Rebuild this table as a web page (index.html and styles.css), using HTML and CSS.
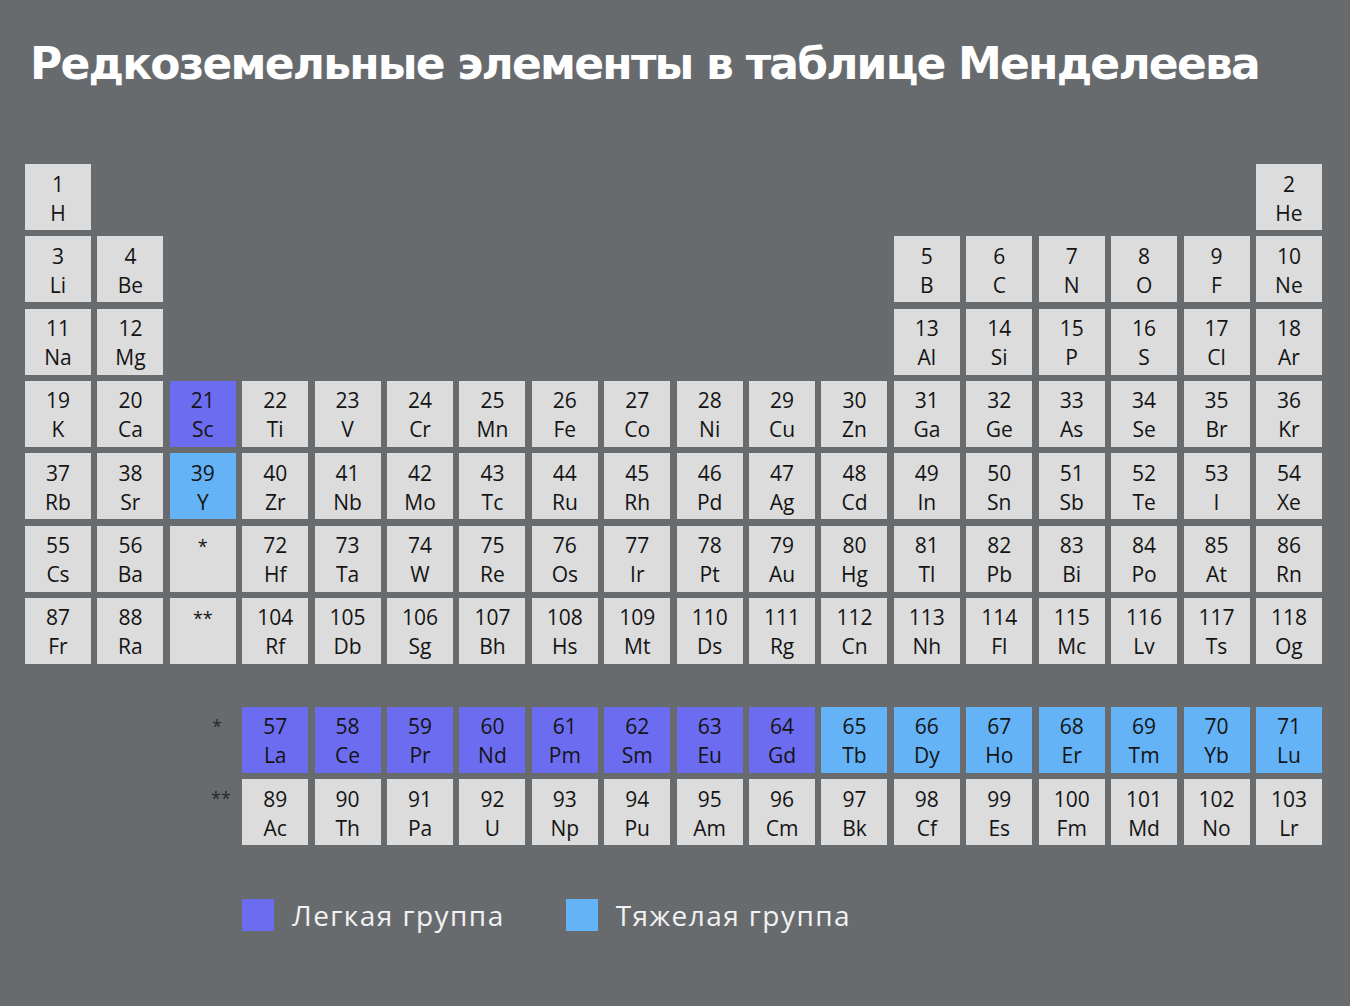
FILE: index.html
```html
<!DOCTYPE html>
<html lang="ru">
<head>
<meta charset="utf-8">
<title>Редкоземельные элементы</title>
<link rel="stylesheet" href="styles.css">
</head>
<body>
<div class="page">
  <h1 class="title">Редкоземельные элементы в таблице Менделеева</h1>

  <div class="table main">
    <div class="cell"><span>1</span><span>H</span></div>
    <div class="cell c18"><span>2</span><span>He</span></div>

    <div class="cell"><span>3</span><span>Li</span></div>
    <div class="cell"><span>4</span><span>Be</span></div>
    <div class="cell c13"><span>5</span><span>B</span></div>
    <div class="cell"><span>6</span><span>C</span></div>
    <div class="cell"><span>7</span><span>N</span></div>
    <div class="cell"><span>8</span><span>O</span></div>
    <div class="cell"><span>9</span><span>F</span></div>
    <div class="cell"><span>10</span><span>Ne</span></div>

    <div class="cell"><span>11</span><span>Na</span></div>
    <div class="cell"><span>12</span><span>Mg</span></div>
    <div class="cell c13"><span>13</span><span>Al</span></div>
    <div class="cell"><span>14</span><span>Si</span></div>
    <div class="cell"><span>15</span><span>P</span></div>
    <div class="cell"><span>16</span><span>S</span></div>
    <div class="cell"><span>17</span><span>Cl</span></div>
    <div class="cell"><span>18</span><span>Ar</span></div>

    <div class="cell"><span>19</span><span>K</span></div>
    <div class="cell"><span>20</span><span>Ca</span></div>
    <div class="cell light"><span>21</span><span>Sc</span></div>
    <div class="cell"><span>22</span><span>Ti</span></div>
    <div class="cell"><span>23</span><span>V</span></div>
    <div class="cell"><span>24</span><span>Cr</span></div>
    <div class="cell"><span>25</span><span>Mn</span></div>
    <div class="cell"><span>26</span><span>Fe</span></div>
    <div class="cell"><span>27</span><span>Co</span></div>
    <div class="cell"><span>28</span><span>Ni</span></div>
    <div class="cell"><span>29</span><span>Cu</span></div>
    <div class="cell"><span>30</span><span>Zn</span></div>
    <div class="cell"><span>31</span><span>Ga</span></div>
    <div class="cell"><span>32</span><span>Ge</span></div>
    <div class="cell"><span>33</span><span>As</span></div>
    <div class="cell"><span>34</span><span>Se</span></div>
    <div class="cell"><span>35</span><span>Br</span></div>
    <div class="cell"><span>36</span><span>Kr</span></div>

    <div class="cell"><span>37</span><span>Rb</span></div>
    <div class="cell"><span>38</span><span>Sr</span></div>
    <div class="cell heavy"><span>39</span><span>Y</span></div>
    <div class="cell"><span>40</span><span>Zr</span></div>
    <div class="cell"><span>41</span><span>Nb</span></div>
    <div class="cell"><span>42</span><span>Mo</span></div>
    <div class="cell"><span>43</span><span>Tc</span></div>
    <div class="cell"><span>44</span><span>Ru</span></div>
    <div class="cell"><span>45</span><span>Rh</span></div>
    <div class="cell"><span>46</span><span>Pd</span></div>
    <div class="cell"><span>47</span><span>Ag</span></div>
    <div class="cell"><span>48</span><span>Cd</span></div>
    <div class="cell"><span>49</span><span>In</span></div>
    <div class="cell"><span>50</span><span>Sn</span></div>
    <div class="cell"><span>51</span><span>Sb</span></div>
    <div class="cell"><span>52</span><span>Te</span></div>
    <div class="cell"><span>53</span><span>I</span></div>
    <div class="cell"><span>54</span><span>Xe</span></div>

    <div class="cell"><span>55</span><span>Cs</span></div>
    <div class="cell"><span>56</span><span>Ba</span></div>
    <div class="cell mark"><span>*</span></div>
    <div class="cell"><span>72</span><span>Hf</span></div>
    <div class="cell"><span>73</span><span>Ta</span></div>
    <div class="cell"><span>74</span><span>W</span></div>
    <div class="cell"><span>75</span><span>Re</span></div>
    <div class="cell"><span>76</span><span>Os</span></div>
    <div class="cell"><span>77</span><span>Ir</span></div>
    <div class="cell"><span>78</span><span>Pt</span></div>
    <div class="cell"><span>79</span><span>Au</span></div>
    <div class="cell"><span>80</span><span>Hg</span></div>
    <div class="cell"><span>81</span><span>Tl</span></div>
    <div class="cell"><span>82</span><span>Pb</span></div>
    <div class="cell"><span>83</span><span>Bi</span></div>
    <div class="cell"><span>84</span><span>Po</span></div>
    <div class="cell"><span>85</span><span>At</span></div>
    <div class="cell"><span>86</span><span>Rn</span></div>

    <div class="cell"><span>87</span><span>Fr</span></div>
    <div class="cell"><span>88</span><span>Ra</span></div>
    <div class="cell mark"><span>**</span></div>
    <div class="cell"><span>104</span><span>Rf</span></div>
    <div class="cell"><span>105</span><span>Db</span></div>
    <div class="cell"><span>106</span><span>Sg</span></div>
    <div class="cell"><span>107</span><span>Bh</span></div>
    <div class="cell"><span>108</span><span>Hs</span></div>
    <div class="cell"><span>109</span><span>Mt</span></div>
    <div class="cell"><span>110</span><span>Ds</span></div>
    <div class="cell"><span>111</span><span>Rg</span></div>
    <div class="cell"><span>112</span><span>Cn</span></div>
    <div class="cell"><span>113</span><span>Nh</span></div>
    <div class="cell"><span>114</span><span>Fl</span></div>
    <div class="cell"><span>115</span><span>Mc</span></div>
    <div class="cell"><span>116</span><span>Lv</span></div>
    <div class="cell"><span>117</span><span>Ts</span></div>
    <div class="cell"><span>118</span><span>Og</span></div>
  </div>

  <div class="table series">
    <div class="label c3">*</div>
    <div class="cell light"><span>57</span><span>La</span></div>
    <div class="cell light"><span>58</span><span>Ce</span></div>
    <div class="cell light"><span>59</span><span>Pr</span></div>
    <div class="cell light"><span>60</span><span>Nd</span></div>
    <div class="cell light"><span>61</span><span>Pm</span></div>
    <div class="cell light"><span>62</span><span>Sm</span></div>
    <div class="cell light"><span>63</span><span>Eu</span></div>
    <div class="cell light"><span>64</span><span>Gd</span></div>
    <div class="cell heavy"><span>65</span><span>Tb</span></div>
    <div class="cell heavy"><span>66</span><span>Dy</span></div>
    <div class="cell heavy"><span>67</span><span>Ho</span></div>
    <div class="cell heavy"><span>68</span><span>Er</span></div>
    <div class="cell heavy"><span>69</span><span>Tm</span></div>
    <div class="cell heavy"><span>70</span><span>Yb</span></div>
    <div class="cell heavy"><span>71</span><span>Lu</span></div>

    <div class="label c3 two">**</div>
    <div class="cell"><span>89</span><span>Ac</span></div>
    <div class="cell"><span>90</span><span>Th</span></div>
    <div class="cell"><span>91</span><span>Pa</span></div>
    <div class="cell"><span>92</span><span>U</span></div>
    <div class="cell"><span>93</span><span>Np</span></div>
    <div class="cell"><span>94</span><span>Pu</span></div>
    <div class="cell"><span>95</span><span>Am</span></div>
    <div class="cell"><span>96</span><span>Cm</span></div>
    <div class="cell"><span>97</span><span>Bk</span></div>
    <div class="cell"><span>98</span><span>Cf</span></div>
    <div class="cell"><span>99</span><span>Es</span></div>
    <div class="cell"><span>100</span><span>Fm</span></div>
    <div class="cell"><span>101</span><span>Md</span></div>
    <div class="cell"><span>102</span><span>No</span></div>
    <div class="cell"><span>103</span><span>Lr</span></div>
  </div>

  <div class="legend">
    <div class="legend-item"><span class="swatch swatch-light"></span><span class="legend-text">Легкая группа</span></div>
    <div class="legend-item"><span class="swatch swatch-heavy"></span><span class="legend-text">Тяжелая группа</span></div>
  </div>
</div>
</body>
</html>
```

FILE: styles.css
```css
html, body {
  margin: 0;
  padding: 0;
  background: #686b6e;
}

.page {
  width: 1350px;
  height: 1006px;
  padding: 0 0 0 25px;
  box-sizing: border-box;
  background: #686b6e;
}

.title {
  margin: 0;
  padding: 36px 0 0 5px;
  height: 164px;
  box-sizing: border-box;
  font-family: "DejaVu Sans", sans-serif;
  font-weight: 700;
  font-size: 44px;
  line-height: 56px;
  color: #ffffff;
  letter-spacing: -1.8px;
  white-space: nowrap;
}

.table {
  display: grid;
  grid-template-columns: repeat(18, 66px);
  grid-auto-rows: 66px;
  column-gap: 6.41px;
  row-gap: 6.33px;
}

.series {
  margin-top: 43px;
}

.cell {
  background: #dcdcdc;
  color: #141414;
  font-family: "Open Sans", "DejaVu Sans", sans-serif;
  font-size: 21px;
  line-height: 29px;
  padding-top: 3px;
  box-sizing: border-box;
  display: flex;
  flex-direction: column;
  align-items: center;
  justify-content: center;
}

.cell.light { background: #6b6cef; }
.cell.heavy { background: #63b3f6; }

.cell.mark {
  justify-content: flex-start;
  padding-top: 9px;
  font-size: 18px;
  line-height: 22px;
}

.c3 { grid-column-start: 3; }
.c13 { grid-column-start: 13; }
.c18 { grid-column-start: 18; }

.label {
  color: #2a2a2a;
  font-family: "Open Sans", "DejaVu Sans", sans-serif;
  font-size: 18px;
  line-height: 22px;
  text-align: right;
  padding: 8px 14px 0 0;
}

.label.two {
  padding-right: 5px;
}

.legend {
  display: flex;
  align-items: center;
  margin: 53px 0 0 217px;
}

.legend-item {
  display: flex;
  align-items: center;
  gap: 18px;
  margin-right: 61px;
}

.swatch {
  width: 32px;
  height: 32px;
  display: block;
}

.swatch-light { background: #6b6cef; }
.swatch-heavy { background: #63b3f6; }

.legend-text {
  font-family: "Open Sans", sans-serif;
  font-size: 28px;
  letter-spacing: 1.45px;
  color: #f2f2f2;
  line-height: 34px;
}
```
